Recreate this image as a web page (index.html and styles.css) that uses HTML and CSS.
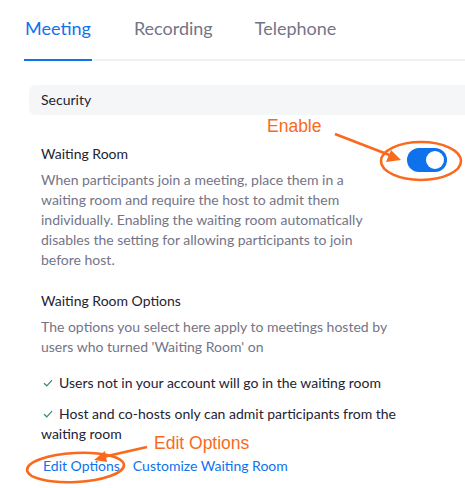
FILE: index.html
```html
<!DOCTYPE html>
<html>
<head>
<meta charset="utf-8">
<link rel="stylesheet" href="styles.css">
</head>
<body>
<div class="page">
  <nav class="tabs">
    <div class="tab active">Meeting</div>
    <div class="tab">Recording</div>
    <div class="tab">Telephone</div>
  </nav>
  <div class="content">
    <div class="section-bar">Security</div>
    <div class="setting">
      <div class="setting-text">
        <div class="setting-title">Waiting Room</div>
        <div class="setting-desc">When participants join a meeting, place them in a waiting room and require the host to admit them individually. Enabling the waiting room automatically disables the setting for allowing participants to join before host.</div>
      </div>
      <div class="toggle"><span class="knob"></span></div>
    </div>
    <div class="options">
      <div class="setting-title">Waiting Room Options</div>
      <div class="options-desc">The options you select here apply to meetings hosted by users who turned 'Waiting Room' on</div>
      <div class="check-item first"><svg class="check" width="10" height="8" viewBox="0 0 10 8"><path d="M1 4.2 L3.8 6.8 L9 1.2" fill="none" stroke="#3f8a5c" stroke-width="1.2"/></svg>Users not in your account will go in the waiting room</div>
      <div class="check-item"><svg class="check" width="10" height="8" viewBox="0 0 10 8"><path d="M1 4.2 L3.8 6.8 L9 1.2" fill="none" stroke="#3f8a5c" stroke-width="1.2"/></svg>Host and co-hosts only can admit participants from the waiting room</div>
      <div class="links"><a class="link">Edit Options</a><a class="link">Customize Waiting Room</a></div>
    </div>
  </div>
  <div class="note note-enable">Enable</div>
  <div class="note note-edit">Edit Options</div>
  <svg class="annotations" width="465" height="488" viewBox="0 0 465 488">
    <ellipse cx="421" cy="161" rx="40" ry="19" fill="none" stroke="#f96a1e" stroke-width="2.6"/>
    <line x1="335" y1="134" x2="392" y2="156" stroke="#f96a1e" stroke-width="2.8"/>
    <polygon points="401,160 386,162 391,150" fill="#f96a1e"/>
    <ellipse cx="75.5" cy="467.5" rx="48.5" ry="14.5" transform="rotate(-3 75.5 467.5)" fill="none" stroke="#f96a1e" stroke-width="2.6"/>
    <line x1="147" y1="447" x2="103" y2="457" stroke="#f96a1e" stroke-width="2.8"/>
    <polygon points="94,460 105,451 107,462" fill="#f96a1e"/>
  </svg>
</div>
</body>
</html>
```

FILE: styles.css
```css
html, body {
  margin: 0;
  padding: 0;
  background: #ffffff;
  overflow: hidden;
}
body {
  font-family: Lato, "Open Sans", sans-serif;
  color: #232333;
}
.page {
  position: relative;
  width: 465px;
  height: 488px;
  overflow: hidden;
}
.tabs {
  display: flex;
  margin-left: 24px;
  padding-top: 16px;
  border-bottom: 2px solid #f0f1f3;
}
.tab {
  font-size: 18px;
  line-height: 24px;
  color: #747487;
  padding-bottom: 19px;
  margin-right: 42px;
  margin-bottom: -2px;
  border-bottom: 2px solid transparent;
}
.tab.active {
  color: #0e72ed;
  border-bottom-color: #0e72ed;
  padding-left: 1px;
  padding-right: 1px;
}
.content {
  margin-left: 29px;
  padding-top: 24px;
}
.section-bar {
  height: 30px;
  line-height: 30px;
  padding-left: 12px;
  font-size: 14px;
  background: #f5f6f8;
  border-radius: 7px 0 0 7px;
  color: #232333;
}
.setting {
  display: flex;
  justify-content: space-between;
  align-items: flex-start;
  padding: 29px 18px 0 12px;
}
.setting-title {
  font-size: 14px;
  line-height: 20px;
  color: #232333;
}
.setting-desc, .options-desc {
  margin-top: 6px;
  font-size: 14px;
  line-height: 20px;
  color: #747487;
}
.setting-desc {
  width: 340px;
}
.toggle {
  width: 40px;
  height: 24px;
  margin-top: 4px;
  border-radius: 12px;
  background: #0e72ed;
  position: relative;
  flex: none;
}
.knob {
  position: absolute;
  right: 3px;
  top: 3px;
  width: 18px;
  height: 18px;
  border-radius: 50%;
  background: #ffffff;
}
.options {
  padding-left: 12px;
  padding-top: 21px;
  width: 368px;
}
.check-item {
  font-size: 14px;
  line-height: 20px;
  color: #232333;
  margin-top: 11px;
}
.check-item.first {
  margin-top: 16px;
}
.check {
  margin-left: 2px;
  margin-right: 6px;
  vertical-align: 1px;
}
.links {
  margin-top: 12px;
  font-size: 14px;
  line-height: 20px;
  display: flex;
  gap: 13px;
  padding-left: 2px;
}
.link {
  color: #0e72ed;
}
.note {
  position: absolute;
  font-family: "Liberation Sans", Arial, sans-serif;
  font-size: 17.5px;
  line-height: 20px;
  color: #f96a1e;
}
.note-enable {
  left: 267px;
  top: 116px;
}
.note-edit {
  left: 154px;
  top: 433px;
}
.annotations {
  position: absolute;
  left: 0;
  top: 0;
  pointer-events: none;
}
```
